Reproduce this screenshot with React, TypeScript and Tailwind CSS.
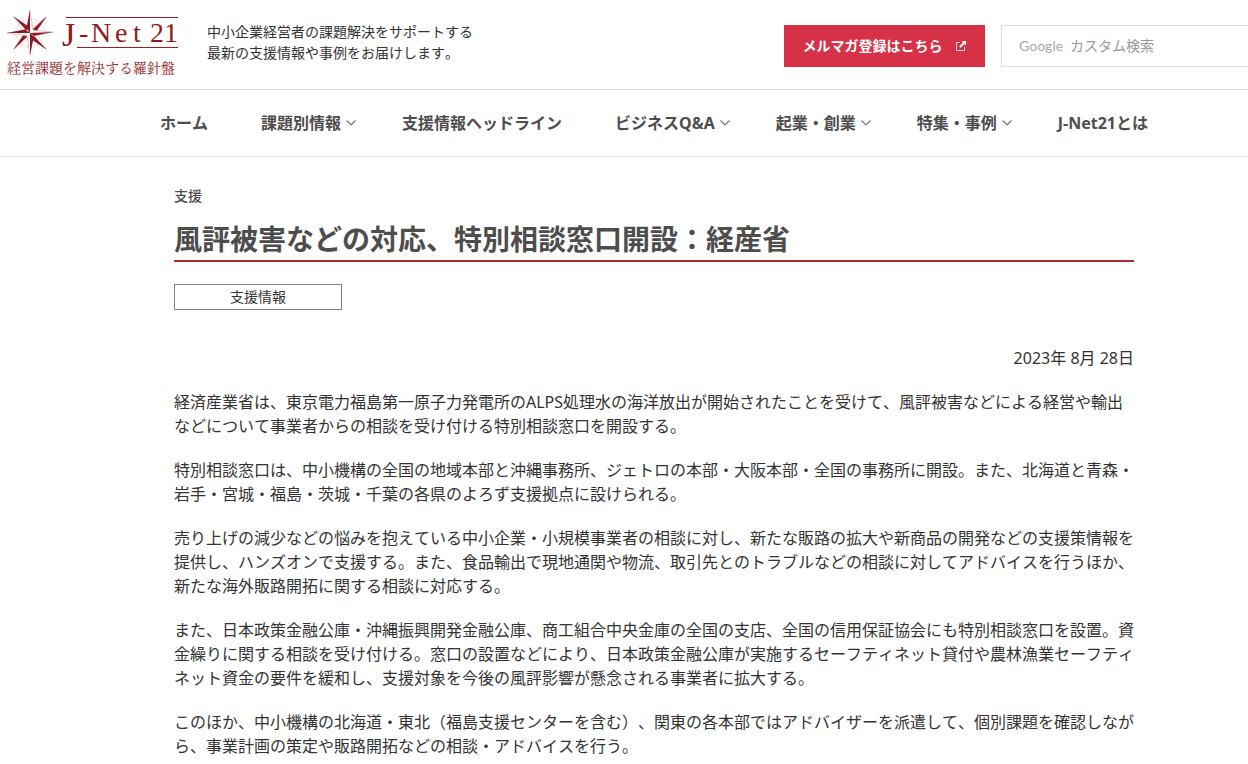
const navItems = [
  { label: "ホーム", menu: false },
  { label: "課題別情報", menu: true },
  { label: "支援情報ヘッドライン", menu: false },
  { label: "ビジネスQ&A", menu: true },
  { label: "起業・創業", menu: true },
  { label: "特集・事例", menu: true },
  { label: "J-Net21とは", menu: false },
];

const paragraphs = [
  "経済産業省は、東京電力福島第一原子力発電所のALPS処理水の海洋放出が開始されたことを受けて、風評被害などによる経営や輸出などについて事業者からの相談を受け付ける特別相談窓口を開設する。",
  "特別相談窓口は、中小機構の全国の地域本部と沖縄事務所、ジェトロの本部・大阪本部・全国の事務所に開設。また、北海道と青森・岩手・宮城・福島・茨城・千葉の各県のよろず支援拠点に設けられる。",
  "売り上げの減少などの悩みを抱えている中小企業・小規模事業者の相談に対し、新たな販路の拡大や新商品の開発などの支援策情報を提供し、ハンズオンで支援する。また、食品輸出で現地通関や物流、取引先とのトラブルなどの相談に対してアドバイスを行うほか、新たな海外販路開拓に関する相談に対応する。",
  "また、日本政策金融公庫・沖縄振興開発金融公庫、商工組合中央金庫の全国の支店、全国の信用保証協会にも特別相談窓口を設置。資金繰りに関する相談を受け付ける。窓口の設置などにより、日本政策金融公庫が実施するセーフティネット貸付や農林漁業セーフティネット資金の要件を緩和し、支援対象を今後の風評影響が懸念される事業者に拡大する。",
  "このほか、中小機構の北海道・東北（福島支援センターを含む）、関東の各本部ではアドバイザーを派遣して、個別課題を確認しながら、事業計画の策定や販路開拓などの相談・アドバイスを行う。",
];

function Logo() {
  return (
    <svg viewBox="0 0 172 70" className="h-[70px] w-[172px]" role="img" aria-label="J-Net 21">
      <circle cx="23" cy="25" r="14" fill="none" stroke="#d9a5a8" strokeWidth="0.5" strokeDasharray="2 1" />
      <g fill="#fff" stroke="#d9a5a8" strokeWidth="0.5">
        <path d="M7 9 25 20 39 9 28 23 39 41 25 29 7 41 18 27Z" />
      </g>
      <g fill="#8f1a22">
        <path d="M6 8 22 19 23 25 18 21ZM40 8 29 24 23 25 26 21ZM6 42 17 26 23 25 20 29ZM40 42 24 31 23 25 28 29Z" />
      </g>
      <path d="M23 2 26 22 46 24 26 28 23 47 20 28 0 25 20 22Z" fill="#fff" stroke="#c98a8e" strokeWidth="0.5" />
      <path d="M23 2 19 22 23 25ZM46 24 26 28 23 25ZM23 47 27 28 23 25ZM0 25 20 21 23 25Z" fill="#8f1a22" />
      <path d="M59 9.5H171M70 39.5H171" stroke="#9b1c26" strokeWidth="1" />
      <g fill="#8f1a22" fontFamily="'Liberation Serif', serif">
        <text x="55" y="38" fontSize="34">J</text>
        <text x="72" y="34" fontSize="28">-</text>
        <text x="84" y="34" fontSize="28">N</text>
        <text x="108" y="34" fontSize="28">e</text>
        <text x="126" y="34" fontSize="28">t</text>
        <text x="143" y="34" fontSize="28">21</text>
      </g>
      <text x="0" y="65" fontSize="14" fill="#8f1a22" fontFamily="'Noto Serif CJK JP', 'Noto Sans CJK JP', serif">
        経営課題を解決する羅針盤
      </text>
    </svg>
  );
}

function ExternalIcon() {
  return (
    <svg viewBox="0 0 12 12" className="h-3 w-3" fill="none" stroke="currentColor" aria-hidden="true">
      <path d="M5 2.5H1.5V10.5H9.5V7" opacity="0.8" />
      <path d="M5 7 9.5 2.5" strokeWidth="2" />
      <path d="M6.5 1H11V5.5Z" fill="currentColor" stroke="none" />
    </svg>
  );
}

function Chevron() {
  return (
    <svg viewBox="0 0 12 12" className="ml-1 h-3 w-3" fill="none" stroke="#777" strokeWidth="1.2" aria-hidden="true">
      <path d="M1.5 3.5 6 8 10.5 3.5" />
    </svg>
  );
}

export default function App() {
  return (
    <div lang="ja" className="overflow-x-hidden bg-white font-['Noto_Sans','Noto_Sans_CJK_JP',sans-serif] text-[#333] [font-kerning:none] [text-spacing-trim:space-all]">
      <div className="min-w-[1308px]">
        <header className="flex h-[90px] items-start border-b border-[#ddd] pl-[7px]">
          <a href="#" className="mt-2">
            <Logo />
          </a>
          <p className="mt-[21px] ml-7 text-sm leading-[21px]">
            中小企業経営者の課題解決をサポートする
            <br />
            最新の支援情報や事例をお届けします。
          </p>
          <div className="mt-[25px] ml-auto flex gap-4">
            <a href="#" className="flex h-[42px] w-[201px] items-center justify-center gap-3 bg-[#d73148] text-sm font-bold text-white">
              メルマガ登録はこちら
              <ExternalIcon />
            </a>
            <div className="flex h-[42px] w-[307px] items-center border border-[#ddd] pl-[17px]">
              <label htmlFor="search" className="font-[Lato,sans-serif] text-sm text-[#aaa]">
                Google
              </label>
              <input id="search" type="text" placeholder="カスタム検索" className="ml-[7px] min-w-0 flex-1 text-sm outline-none placeholder:text-[#999]" />
            </div>
          </div>
        </header>

        <nav className="border-b border-[#ddd]">
          <ul className="flex h-[66px] items-center justify-center gap-[41px] text-base font-bold text-[#4d4d4d]">
            {navItems.map((item) => (
              <li key={item.label} className={item.menu ? "" : "pr-3 last:pr-0"}>
                {item.menu ? (
                  <button type="button" className="flex w-full items-center pr-1">
                    {item.label}
                    <Chevron />
                  </button>
                ) : (
                  <a href="#">{item.label}</a>
                )}
              </li>
            ))}
          </ul>
        </nav>

        <main className="mx-auto max-w-[960px] pt-[27px]">
          <p className="text-sm leading-6 font-medium text-[#4d4d4d]">支援</p>
          <h1 className="mt-[13px] border-b-2 border-[#b3282d] pb-[3px] text-[28px] leading-9 font-bold text-[#4d4d4d]">
            風評被害などの対応、特別相談窓口開設：経産省
          </h1>
          <a href="#" className="mt-[22px] flex h-[26px] w-[168px] items-center justify-center border border-[#808080] text-sm">
            支援情報
          </a>
          <p className="mt-9 text-right text-base leading-6">2023年 8月 28日</p>
          <div className="mt-5 space-y-5 pb-5 text-base leading-6">
            {paragraphs.map((text) => (
              <p key={text}>{text}</p>
            ))}
          </div>
        </main>
      </div>
    </div>
  );
}
